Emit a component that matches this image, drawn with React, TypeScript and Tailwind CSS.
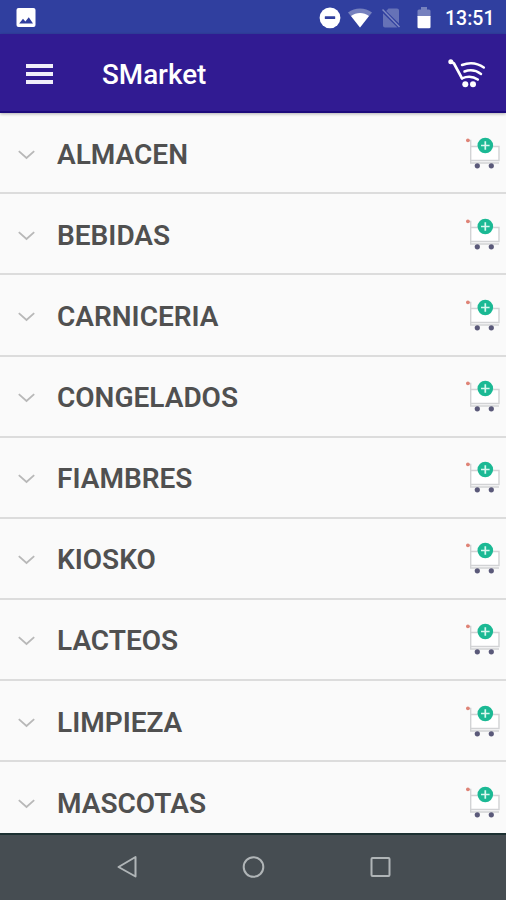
const categories = [
  "ALMACEN",
  "BEBIDAS",
  "CARNICERIA",
  "CONGELADOS",
  "FIAMBRES",
  "KIOSKO",
  "LACTEOS",
  "LIMPIEZA",
  "MASCOTAS",
];

function StatusBar() {
  return (
    <header className="flex h-[34px] shrink-0 items-center bg-[#303f9f] pl-4 pr-[11px] pt-0.5 text-white">
      <svg className="h-5 w-5" viewBox="0 0 20 20">
        <rect x="0.5" y="0" width="19" height="19" rx="2" fill="white" />
        <path d="M3.2 15.5 7 10.8l2.4 2.8 3.4-4.4 4.2 6.3z" fill="#303f9f" />
      </svg>
      <svg className="ml-auto h-[22px] w-[22px]" viewBox="0 0 22 22">
        <circle cx="11" cy="10.8" r="10.4" fill="white" />
        <rect x="5.8" y="9.3" width="10.4" height="2.6" rx="0.5" fill="#303f9f" />
      </svg>
      <svg className="ml-[7px] h-5 w-6" viewBox="0 0 24 20">
        <path d="M0 4.6C7-1 17-1 24 4.6L12 19.5z" fill="#7681be" />
        <path d="M3 8.1c5.2-4.2 12.8-4.2 18 0l-9 11.4z" fill="white" />
      </svg>
      <svg className="ml-[10px] h-5 w-[18px]" viewBox="0 0 18 20">
        <path d="M6.5 0.5H15q2 0 2 2v13L4.2 3zM1 5.2 15.5 19.5H3q-2 0-2-2z" fill="#6672b7" />
        <path d="M0.5 1.5 17.5 19" stroke="#7f89c3" strokeWidth="1.5" />
      </svg>
      <svg className="ml-[17px] h-[22px] w-[14px]" viewBox="0 0 14 22">
        <path d="M4 0h6v2.5h2q1.5 0 1.5 1.5v6H.5V4Q.5 2.5 2 2.5h2z" fill="#7681be" />
        <path d="M.5 9h13v11q0 1.3-1.3 1.3H1.8Q.5 21.3.5 20z" fill="white" />
      </svg>
      <span className="ml-[14px] mt-0.5 w-[50px] whitespace-nowrap text-[19.5px] font-medium leading-none">
        13:51
      </span>
    </header>
  );
}

function Toolbar() {
  return (
    <div className="z-10 flex h-[79px] shrink-0 items-center border-b-2 border-[#1c0a7c] bg-[#311b92] pl-[26px] pr-5 text-white shadow-[0_1px_3px_rgba(0,0,0,0.3)]">
      <div className="mt-[2px] flex w-[27px] flex-col gap-1">
        <span className="h-1 bg-[#f0effa]" />
        <span className="h-1 bg-[#f0effa]" />
        <span className="h-1 bg-[#f0effa]" />
      </div>
      <h1 className="ml-[49px] mt-1 text-[27.8px] font-medium leading-none">SMarket</h1>
      <svg
        className="ml-auto h-[30px] w-[38px]"
        viewBox="0 0 38 30"
        fill="none"
        stroke="white"
        strokeLinecap="round"
      >
        <circle cx="2.8" cy="3.7" r="2.5" fill="white" stroke="none" />
        <path d="M3 3.7 6 5.5 14 20.3" strokeWidth="2.7" />
        <path d="M14 7C21.5 4 29.500 5 35.800 9.500" strokeWidth="2.5" />
        <path d="M16.5 13.5c5.5-2 11.5-1.3 16.5 2.5" strokeWidth="2.5" />
        <path d="M14 20.3c5.5-2.300 11.500-1.800 15.800 1.300" strokeWidth="2.5" />
        <circle cx="17.3" cy="26.300" r="3" fill="white" stroke="none" />
        <circle cx="25" cy="26.300" r="3" fill="white" stroke="none" />
      </svg>
    </div>
  );
}

function AddCartIcon() {
  return (
    <svg className="ml-auto h-8 w-[35px]" viewBox="0 0 35 32" fill="none">
      <path d="M4.5 9.5h28v14h-28z" fill="white" />
      <path d="M2 3.5h2.7V26H33M5 9.5h28v14H5" stroke="#d2d3d5" strokeWidth="1.4" />
      <circle cx="1.9" cy="3.3" r="1.9" fill="#df8376" />
      <circle cx="19.3" cy="8.5" r="7.8" fill="#1bb994" />
      <path d="M19.3 4.2v8.6M15 8.5h8.6" stroke="#d9f7ef" strokeWidth="1.7" />
      <circle cx="11.3" cy="28.8" r="2.6" fill="#5a5979" />
      <circle cx="25.3" cy="28.8" r="2.6" fill="#5a5979" />
    </svg>
  );
}

function CategoryRow({ name }: { name: string }) {
  return (
    <li className="flex h-[81.1px] shrink-0 items-center border-b-2 border-[#dcdcdc] pl-[18px] pr-[5px]">
      <svg className="mt-1 h-[10px] w-[17px]" viewBox="0 0 17 10" fill="none">
        <path d="M.8 1.2 8.5 8l7.7-6.8" stroke="#b8b8b8" strokeWidth="1.8" />
      </svg>
      <span className="ml-[22px] mt-1 text-[28px] font-semibold leading-none text-[#505050]">{name}</span>
      <AddCartIcon />
    </li>
  );
}

function NavigationBar() {
  return (
    <nav className="z-10 h-[67px] shrink-0 border-t-2 border-[#1c3032] bg-[#464d52]">
      <svg className="h-[65px] w-full" viewBox="0 0 506 65" fill="none" stroke="#b0b5b7" strokeWidth="2">
        <path d="M135.5 22v19.5L118.5 32z" strokeLinejoin="round" />
        <circle cx="253.5" cy="32" r="9.8" />
        <rect x="371.5" y="23" width="18" height="18" rx="1" />
      </svg>
    </nav>
  );
}

export default function App() {
  return (
    <div className="flex h-screen w-full flex-col overflow-hidden bg-[#fafafa] font-['Roboto',sans-serif]">
      <StatusBar />
      <Toolbar />
      <main className="min-h-0 flex-1 overflow-hidden pt-[0.3px]">
        <ul className="flex flex-col">
          {categories.map((name) => (
            <CategoryRow key={name} name={name} />
          ))}
        </ul>
      </main>
      <NavigationBar />
    </div>
  );
}
